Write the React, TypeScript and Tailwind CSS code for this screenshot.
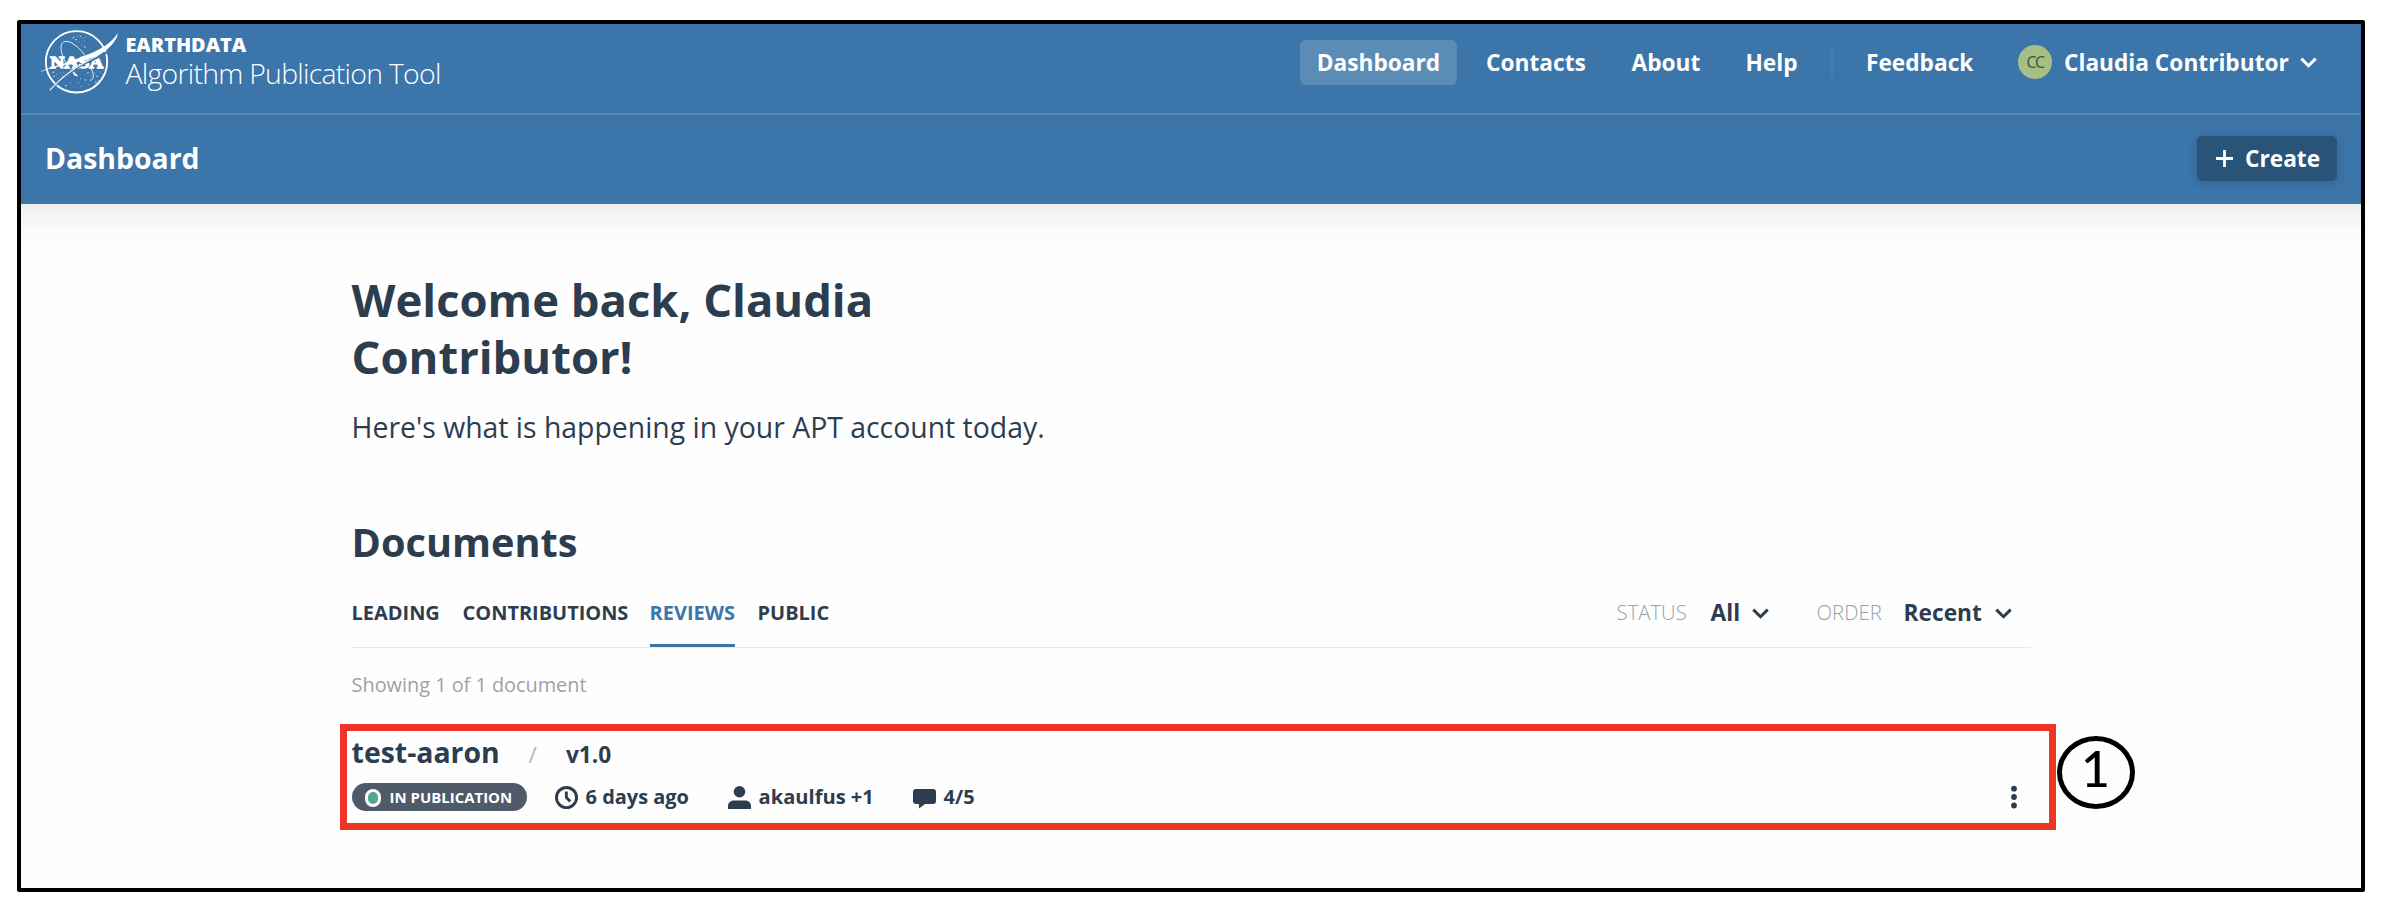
import React from "react";

const Chevron = ({ className = "" }: { className?: string }) => (
  <svg className={"shrink-0 " + className} width="17" height="11" viewBox="0 0 17 11" fill="none">
    <path d="M1.3 1.6 8.5 8.7 15.7 1.6" stroke="currentColor" strokeWidth="3" />
  </svg>
);

const STARS = [
  [125, 32], [133, 38], [141, 35], [112, 42], [122, 50], [137, 47], [104, 36], [116, 33], [131, 57], [139, 64],
  [54, 147], [66, 143], [47, 152], [72, 152], [58, 158], [67, 163], [80, 157], [126, 160], [140, 163], [170, 143],
  [185, 140], [176, 152], [193, 146], [189, 157], [82, 180], [97, 172], [150, 178], [172, 170], [128, 183], [157, 152],
  [44, 140], [76, 140], [90, 150], [148, 142], [181, 165], [120, 172],
];

const NasaLogo = () => (
  <svg className="mt-px h-[75px] w-[85px] shrink-0" viewBox="0 0 255 225" fill="none">
    <circle cx="115.5" cy="110.5" r="92" stroke="#fff" strokeWidth="5.5" />
    {STARS.map(([x, y], i) => (
      <rect key={i} x={x} y={y} width={i % 3 ? 2.6 : 3.6} height={i % 3 ? 2.6 : 3.6} fill="#fff" fillOpacity={i % 3 ? 0.7 : 0.95} />
    ))}
    <path
      d="M118 152 C88 128 68 92 69 66 C70 46 88 44 108 58 C126 70 138 86 146 100 M158 128 C168 146 170 164 156 166"
      stroke="#fff"
      strokeWidth="2.6"
    />
    <path d="M103 137 112 152M109 146l9 7" stroke="#fff" strokeWidth="4" />
    <text
      x="37"
      y="129"
      textLength="159"
      lengthAdjust="spacingAndGlyphs"
      className="[font-family:'Liberation_Serif',serif] text-[50px] font-bold"
      fill="#fff"
      stroke="#fff"
      strokeWidth="4"
    >
      NASA
    </text>
    <path d="M206 82 C186 96 164 103 142 114 C106 132 70 162 40 191" stroke="#3b75a9" strokeWidth="7" />
    <path d="M9 139 C50 123 110 107 152 88 C190 72 216 58 239 26 C226 64 196 84 168 96 C130 111 60 121 9 139Z" fill="#fff" stroke="#fff" strokeWidth="1" />
    <path d="M237 32 C222 68 182 92 142 112 C100 134 66 162 35 196" stroke="#fff" strokeWidth="3.2" />
  </svg>
);

const ClockIcon = () => (
  <svg className="mt-[3px] h-[23px] w-[23px] shrink-0" viewBox="0 0 16 16" fill="none" stroke="currentColor" strokeWidth="2">
    <circle cx="8" cy="8" r="7" />
    <path d="M7.9 3.8V8l2.7 2.7" />
  </svg>
);

const UserIcon = () => (
  <svg className="mt-[3px] h-[23px] w-[23px] shrink-0" viewBox="0 0 16 16" fill="currentColor">
    <circle cx="8" cy="4" r="4" />
    <path d="M0 16v-2.2C0 11.6 1.8 10 4 10h8c2.2 0 4 1.6 4 3.8V16Z" />
  </svg>
);

const ChatIcon = () => (
  <svg className="mt-[6px] h-[20px] w-[23px] shrink-0" viewBox="0 0 23 20" fill="currentColor">
    <path d="M3 0h17a3 3 0 0 1 3 3v9a3 3 0 0 1-3 3h-8l-6 4.5V15H3a3 3 0 0 1-3-3V3a3 3 0 0 1 3-3Z" />
  </svg>
);

const Header = () => (
  <header className="bg-[#3b75a9] text-white">
    <div className="flex h-[91px] items-start border-b-2 border-[#5489b5] pr-[44px] pl-[17px]">
      <NasaLogo />
      <div className="mt-[9px] ml-[2.4px] whitespace-nowrap">
        <div className="text-[19.87px] leading-[23px] font-extrabold">EARTHDATA</div>
        <div className="text-[28.4px] leading-[34px] font-light tracking-[-0.72px]">Algorithm Publication Tool</div>
      </div>
      <nav className="mt-4 ml-auto flex items-start text-[22.7px] leading-[31px] font-bold whitespace-nowrap">
        <a className="flex h-[45px] w-[157px] justify-center rounded-[6px] bg-[#5a8cb5] pt-[7px]">Dashboard</a>
        <a className="mt-[7px] ml-[29px] w-[100px]">Contacts</a>
        <a className="mt-[7px] ml-[45.500px] w-[68.500px]">About</a>
        <a className="mt-[7px] ml-[45.500px] w-[52.500px]">Help</a>
        <span className="mt-[5px] ml-[33px] h-[34px] w-[2px] bg-[#447cae]" />
        <a className="mt-[7px] ml-[33px] w-[106px]">Feedback</a>
        <span className="mt-[5px] ml-[46px] flex h-[34px] w-[34px] items-center justify-center rounded-full bg-[#a5bf85] text-[16px] leading-[34px] font-medium tracking-[-1.700px] text-[#43503a]">
          CC
        </span>
        <span className="mt-[7px] ml-[12px] w-[225px]">Claudia Contributor</span>
        <Chevron className="mt-[17px] ml-[11px]" />
      </nav>
    </div>
    <div className="flex h-[89px] items-start justify-between pr-[24px] pl-[24px]">
      <h1 className="mt-6 text-[28.4px] leading-[38px] font-bold">Dashboard</h1>
      <button className="mt-[21px] flex h-[45px] w-[140px] items-start rounded-[5px] bg-[#295478] pt-[7px] pl-[19px] text-[22.7px] leading-[31px] font-bold shadow-[0_2px_8px_rgba(40,60,90,0.3)]">
        <svg className="mt-[7px] mr-[12px] shrink-0" width="17" height="17" viewBox="0 0 17 17">
          <path d="M8.5 0v17M0 8.5h17" stroke="currentColor" strokeWidth="2.8" />
        </svg>
        Create
      </button>
    </div>
  </header>
);

const Filters = () => (
  <div className="flex whitespace-nowrap">
    <span className="w-[71px] text-[20.3px] leading-[27px] font-light text-[#97a0a9]">STATUS</span>
    <span className="-mt-[2px] ml-[23px] w-[29px] text-[22.7px] leading-[31px] font-bold">All</span>
    <Chevron className="mt-[9px] ml-[12px]" />
    <span className="ml-[48px] w-[65px] text-[20.3px] leading-[27px] font-light text-[#97a0a9]">ORDER</span>
    <span className="-mt-[2px] ml-[22px] w-[79px] text-[22.7px] leading-[31px] font-bold">Recent</span>
    <Chevron className="mt-[9px] mr-[19px] ml-[12px]" />
  </div>
);

const DocumentCard = () => (
  <article className="relative mt-[35px] w-[1679px] whitespace-nowrap">
    <div className="flex h-[38px] items-baseline">
      <h3 className="w-[149px] text-[28.4px] leading-[38px] font-bold">test-aaron</h3>
      <span className="ml-[28px] text-[22.7px] leading-[31px] text-[#b3b9bf]">/</span>
      <span className="ml-[29px] text-[22.7px] leading-[31px] font-bold">v1.0</span>
    </div>
    <div className="mt-3 flex items-start text-[19.95px] leading-[27px] font-bold">
      <span className="flex h-[28px] w-[175px] shrink-0 items-start rounded-full bg-[#4f5b69] pl-[13px] text-[14.95px] text-white">
        <span className="mt-[6px] h-[18px] w-[16px] shrink-0 rounded-full border-3 border-white bg-[#56a58e]" />
        <span className="mt-1 ml-[9px] leading-[20px]">IN PUBLICATION</span>
      </span>
      <span className="ml-[28px] flex w-[134px] gap-[8px]">
        <ClockIcon />
        6 days ago
      </span>
      <span className="ml-[39px] flex w-[147px] gap-[8px] text-[20.1px]">
        <UserIcon />
        akaulfus +1
      </span>
      <span className="ml-[38px] flex gap-[8px]">
        <ChatIcon />
        4/5
      </span>
      <svg className="mt-[2px] mr-[13px] ml-auto" width="8" height="24" viewBox="0 0 8 24" fill="currentColor">
        <circle cx="4" cy="3.7" r="2.9" />
        <circle cx="4" cy="12" r="2.9" />
        <circle cx="4" cy="20.5" r="2.9" />
      </svg>
    </div>
    <div className="absolute -top-[9px] -left-[12px] h-[106px] w-[1716px] border-7 border-[#ee3424]" />
    <div className="absolute top-[3px] left-[1705px] flex h-[73px] w-[78px] justify-center rounded-[50%] border-5 border-black text-black">
      <span className="-mt-[3px] h-[60px] [font-family:Lato,sans-serif] text-[50px] leading-[60px] font-medium">1</span>
    </div>
  </article>
);

export default function App() {
  return (
    <div className="h-[916px] w-[2388px] overflow-hidden bg-white pt-5 pl-[17px] [font-family:'Open_Sans',sans-serif] text-[#2c3d4f]">
      <div className="h-[872px] w-[2348px] rounded-[2px] border-4 border-black bg-[#fefefe]">
        <Header />
        <main className="h-[684px] bg-[linear-gradient(to_bottom,#eeeeee_0px,#f5f5f5_14px,#fbfbfb_28px,#fefefe_46px)] pt-[67px] pl-[330.6px]">
          <h2 className="w-[640px] text-[45.4px] leading-[57px] font-bold">
            Welcome back, Claudia
            <br />
            Contributor!
          </h2>
          <p className="mt-[23px] text-[28.4px] leading-[38px]">Here's what is happening in your APT account today.</p>
          <h2 className="mt-[69px] text-[39.7px] leading-[54px] font-bold">Documents</h2>
          <div className="mt-[29.500px] flex h-[49px] w-[1679px] justify-between border-b border-[#e8e9ea]">
            <div className="flex h-[48px] text-[19.95px] leading-[27px] font-bold whitespace-nowrap">
              <a className="w-[89px]">LEADING</a>
              <a className="ml-[22px] w-[165px]">CONTRIBUTIONS</a>
              <a className="ml-[22px] w-[85px] border-b-3 border-[#3b75a9] text-[#3b75a9]">REVIEWS</a>
              <a className="ml-[23px]">PUBLIC</a>
            </div>
            <Filters />
          </div>
          <p className="mt-[23px] text-[19.87px] leading-[27px] text-[#9aa2aa]">Showing 1 of 1 document</p>
          <DocumentCard />
        </main>
      </div>
    </div>
  );
}
